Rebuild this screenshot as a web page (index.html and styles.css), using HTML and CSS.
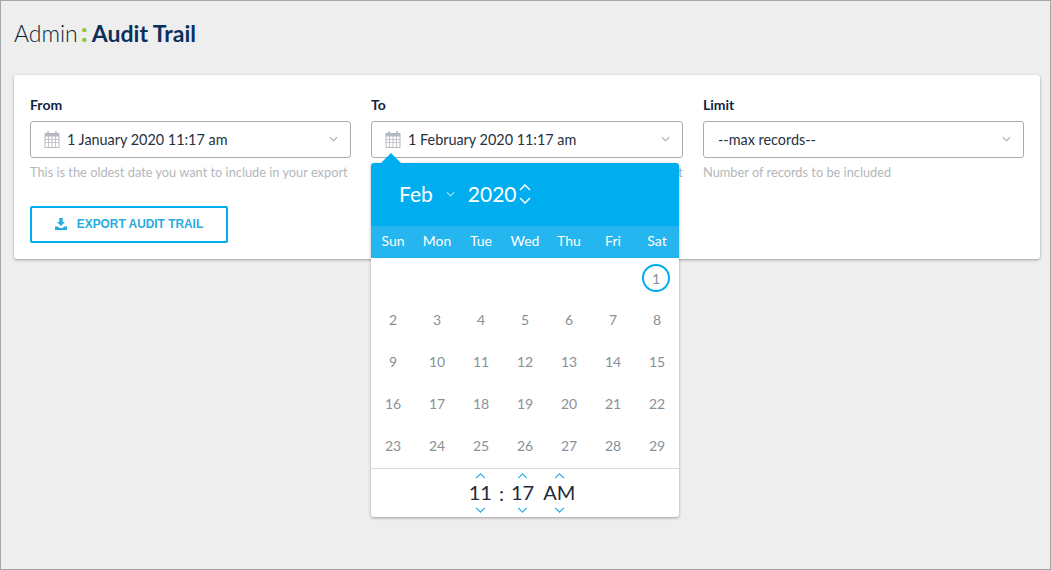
FILE: index.html
```html
<!DOCTYPE html>
<html lang="en">
<head>
    <meta charset="UTF-8">
    <title>Admin: Audit Trail</title>
    <link rel="stylesheet" href="styles.css">
</head>
<body>
    <div class="page">
        <h1 class="title">Admin<span class="title-sep">:</span><b>Audit Trail</b></h1>
        <div class="card">
            <div class="fields">
                <div class="field">
                    <label>From</label>
                    <div class="control">
                        <svg class="cal" viewBox="0 0 16 17"><path d="M3 0.5h2v2H3zM11 0.5h2v2h-2z"/><path fill-rule="evenodd" d="M0.5 2h15v15H0.5zM1.5 5.5v2.5h2.7V5.5zM5 5.5v2.5h2.6V5.5zM8.4 5.5v2.5H11V5.5zM11.8 5.5v2.5h2.7V5.5zM1.5 8.8v2.5h2.7V8.800zM5 8.8v2.5h2.6V8.800zM8.4 8.8v2.5H11V8.800zM11.8 8.8v2.5h2.7V8.800zM1.5 12.100v3.900h2.700v-3.900zM5 12.100v3.900h2.600v-3.900zM8.400 12.100v3.900H11v-3.900zM11.800 12.100v3.900h2.700v-3.900z"/></svg>
                        <span>1 January 2020 11:17 am</span>
                        <svg class="caret" viewBox="0 0 10 6"><path d="M1 1l4 4 4-4"/></svg>
                    </div>
                    <p class="hint">This is the oldest date you want to include in your export</p>
                </div>
                <div class="field to-field">
                    <label>To</label>
                    <div class="control">
                        <svg class="cal" viewBox="0 0 16 17"><path d="M3 0.5h2v2H3zM11 0.5h2v2h-2z"/><path fill-rule="evenodd" d="M0.5 2h15v15H0.5zM1.5 5.5v2.5h2.7V5.5zM5 5.5v2.5h2.6V5.5zM8.4 5.5v2.5H11V5.5zM11.8 5.5v2.5h2.7V5.5zM1.5 8.8v2.5h2.7V8.800zM5 8.8v2.5h2.6V8.800zM8.4 8.8v2.5H11V8.800zM11.8 8.8v2.5h2.7V8.800zM1.5 12.100v3.900h2.700v-3.900zM5 12.100v3.900h2.600v-3.900zM8.400 12.100v3.900H11v-3.900zM11.800 12.100v3.900h2.700v-3.900z"/></svg>
                        <span>1 February 2020 11:17 am</span>
                        <svg class="caret" viewBox="0 0 10 6"><path d="M1 1l4 4 4-4"/></svg>
                    </div>
                    <p class="hint">This is the latest date you wish to include in your export</p>

                    <div class="picker">
                        <div class="picker-head">
                            <span class="month">Feb</span>
                            <svg class="month-caret" viewBox="0 0 10 6"><path d="M1 1l4 4 4-4"/></svg>
                            <span class="year">2020</span>
                            <div class="year-arrows">
                                <svg viewBox="0 0 12 7"><path d="M1 6l5-5 5 5"/></svg>
                                <svg viewBox="0 0 12 7"><path d="M1 1l5 5 5-5"/></svg>
                            </div>
                        </div>
                        <div class="week">
                            <span>Sun</span><span>Mon</span><span>Tue</span><span>Wed</span><span>Thu</span><span>Fri</span><span>Sat</span>
                        </div>
                        <div class="days">
                            <span></span><span></span><span></span><span></span><span></span><span></span><span class="today">1</span>
                            <span>2</span><span>3</span><span>4</span><span>5</span><span>6</span><span>7</span><span>8</span>
                            <span>9</span><span>10</span><span>11</span><span>12</span><span>13</span><span>14</span><span>15</span>
                            <span>16</span><span>17</span><span>18</span><span>19</span><span>20</span><span>21</span><span>22</span>
                            <span>23</span><span>24</span><span>25</span><span>26</span><span>27</span><span>28</span><span>29</span>
                        </div>
                        <div class="time">
                            <div class="spin">
                                <svg viewBox="0 0 12 7"><path d="M1 6l5-5 5 5"/></svg>
                                <span>11</span>
                                <svg viewBox="0 0 12 7"><path d="M1 1l5 5 5-5"/></svg>
                            </div>
                            <span class="colon">:</span>
                            <div class="spin">
                                <svg viewBox="0 0 12 7"><path d="M1 6l5-5 5 5"/></svg>
                                <span>17</span>
                                <svg viewBox="0 0 12 7"><path d="M1 1l5 5 5-5"/></svg>
                            </div>
                            <div class="spin ampm">
                                <svg viewBox="0 0 12 7"><path d="M1 6l5-5 5 5"/></svg>
                                <span>AM</span>
                                <svg viewBox="0 0 12 7"><path d="M1 1l5 5 5-5"/></svg>
                            </div>
                        </div>
                    </div>
                </div>
                <div class="field">
                    <label>Limit</label>
                    <div class="control select">
                        <span>--max records--</span>
                        <svg class="caret" viewBox="0 0 10 6"><path d="M1 1l4 4 4-4"/></svg>
                    </div>
                    <p class="hint">Number of records to be included</p>
                </div>
            </div>
            <button class="export">
                <svg viewBox="0 0 12 12"><path d="M4.300 0h3.400v4H10L6 8 2 4h2.300zM0 8.500h2.800L4.500 10h3l1.700-1.500H12V12H0z"/></svg>
                EXPORT AUDIT TRAIL
            </button>
        </div>
    </div>
</body>
</html>
```
FILE: styles.css
```css
* {
    box-sizing: border-box;
}

html, body {
    margin: 0;
    height: 100%;
}

body {
    font-family: "Lato", "Open Sans", sans-serif;
    background: #eeeeee;
    color: #1d2b3a;
    overflow: hidden;
}

.page {
    height: 570px;
    border: 1px solid #a6a6a6;
    padding: 0 10px 0 13px;
}

.title {
    margin: 18px 0 0;
    height: 56px;
    font-size: 23px;
    line-height: 29px;
    font-weight: 300;
    color: #0c1f33;
}

.title b {
    font-weight: 700;
    color: #0c2f5c;
}

.title-sep {
    color: #8dc63f;
    font-size: 27px;
    line-height: 20px;
    font-weight: 900;
    margin: 0 4px 0 3px;
}

.card {
    background: #fff;
    border-radius: 3px;
    box-shadow: 0 1px 3px rgba(0, 0, 0, 0.35);
    padding: 20px 16px 16px;
    height: 184px;
}

.fields {
    display: grid;
    grid-template-columns: 321px 312px 321px;
    gap: 20px;
}

.field {
    position: relative;
}

.field label {
    display: block;
    font-size: 14px;
    line-height: 20px;
    font-weight: 700;
    color: #12263f;
    margin-bottom: 6px;
}

.control {
    display: flex;
    align-items: center;
    height: 37px;
    border: 1px solid #a9adb3;
    border-radius: 3px;
    padding: 0 12px 0 13px;
    font-size: 14.400px;
    color: #26323f;
}

.control.select {
    padding-left: 14px;
}

.cal {
    width: 16px;
    height: 17px;
    fill: #b5bac1;
    margin-right: 7px;
    flex: none;
}

.caret {
    width: 9px;
    height: 6px;
    margin: -2px 0 0 auto;
    fill: none;
    stroke: #a4a9b0;
    stroke-width: 1.200;
}

.hint {
    margin: 6px 0 0;
    font-size: 12.800px;
    line-height: 17px;
    color: #b3b7bc;
    white-space: nowrap;
}

.export {
    display: flex;
    align-items: center;
    justify-content: center;
    width: 198px;
    height: 37px;
    margin-top: 25px;
    background: #fff;
    border: 2px solid #00aeef;
    border-radius: 2px;
    color: #29abe2;
    font-family: "Liberation Sans", Arial, sans-serif;
    font-size: 11.900px;
    font-weight: 700;
    padding: 0 0 2px 0;
}

.export svg {
    width: 12px;
    height: 12px;
    fill: #29abe2;
    margin-right: 10px;
}

.picker {
    position: absolute;
    top: 68px;
    left: 0;
    width: 308px;
    height: 354px;
    background: #fff;
    border-radius: 3px;
    box-shadow: 0 1px 3px rgba(0, 0, 0, 0.35);
}

.picker::before {
    content: "";
    position: absolute;
    top: -10px;
    left: 10px;
    border-left: 10px solid transparent;
    border-right: 10px solid transparent;
    border-bottom: 10px solid #00aeef;
}

.picker-head {
    display: flex;
    align-items: center;
    height: 63px;
    padding: 0 0 2px 28px;
    background: #00aeef;
    color: #fff;
    border-radius: 3px 3px 0 0;
    font-size: 21px;
}

.month-caret {
    width: 9px;
    height: 6px;
    margin: 0 13px 0 13px;
    fill: none;
    stroke: #9fdcf6;
    stroke-width: 1.300;
}

.year-arrows {
    display: flex;
    flex-direction: column;
    gap: 6px;
    margin-left: 2px;
}

.year-arrows svg {
    display: block;
    width: 12px;
    height: 7px;
    fill: none;
    stroke: #fff;
    stroke-width: 1.500;
}

.week {
    display: grid;
    grid-template-columns: repeat(7, 44px);
    height: 32px;
    align-items: center;
    padding-bottom: 3px;
    background: #26b6ef;
    color: #fff;
    font-size: 14px;
    text-align: center;
}

.days {
    display: grid;
    grid-template-columns: repeat(7, 44px);
    grid-auto-rows: 42px;
    height: 210px;
    font-size: 14px;
    color: #8b8f97;
}

.days span {
    display: flex;
    align-items: center;
    justify-content: center;
    padding-bottom: 4px;
}

.days .today {
    width: 28px;
    height: 28px;
    margin: -2px 0 0 7px;
    padding: 0;
    align-self: center;
    border: 2px solid #00aeef;
    border-radius: 50%;
}

.time {
    display: flex;
    justify-content: center;
    align-items: center;
    height: 49px;
    padding-right: 6px;
    border-top: 1px solid #d8dce3;
    font-size: 20px;
    color: #1d2b3a;
}

.spin {
    display: flex;
    flex-direction: column;
    align-items: center;
}

.spin span {
    line-height: 26px;
    padding-bottom: 2px;
}

.spin svg {
    width: 11px;
    height: 6px;
    fill: none;
    stroke: #29abe2;
    stroke-width: 1.400;
}

.colon {
    margin: 0 7px;
}

.ampm {
    margin-left: 9px;
}
```
